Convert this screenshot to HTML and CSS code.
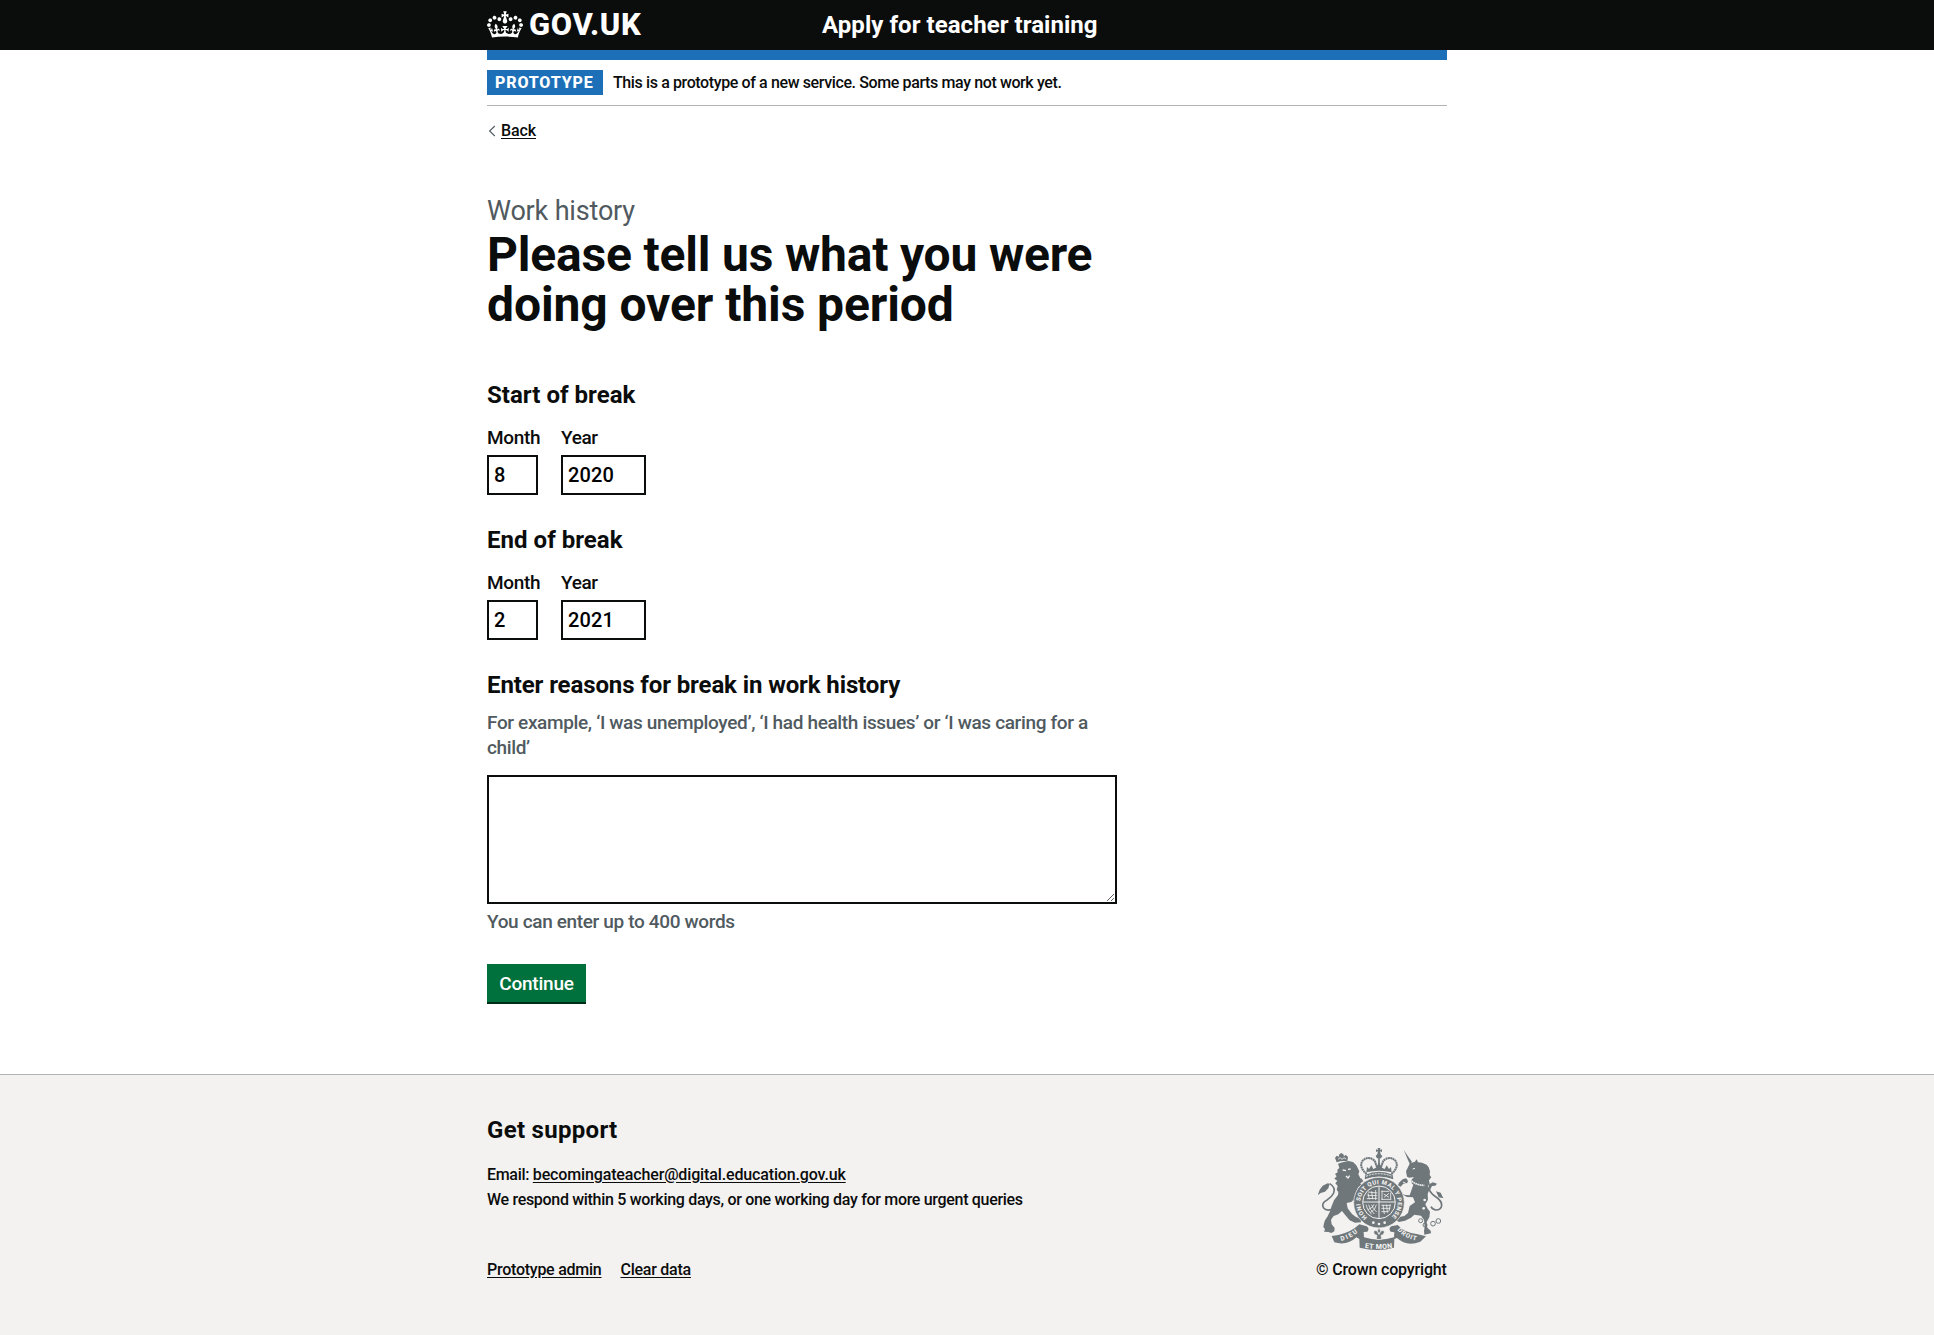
FILE: index.html
```
<!DOCTYPE html>
<html lang="en">
<head>
<meta charset="utf-8">
<title>Please tell us what you were doing over this period</title>
<link rel="stylesheet" href="styles.css">
</head>
<body>
<header class="header">
  <div class="container header-row">
    <a class="logo" href="#">
      <svg class="crown" viewBox="0 0 132 97" width="36" height="27" fill="currentColor" aria-hidden="true"><path fill-rule="evenodd" d="M25 30.2c3.5 1.5 7.7-.2 9.1-3.7 1.5-3.6-.2-7.8-3.9-9.2-3.6-1.4-7.6.3-9.1 3.9-1.4 3.5.3 7.5 3.9 9zM9 39.5c3.6 1.5 7.8-.2 9.2-3.7 1.5-3.6-.2-7.8-3.9-9.1-3.6-1.5-7.6.2-9.1 3.8-1.4 3.5.3 7.5 3.8 9zM4.4 57.2c3.5 1.5 7.7-.2 9.1-3.8 1.5-3.6-.2-7.7-3.9-9.1-3.5-1.5-7.6.3-9.1 3.8-1.4 3.5.3 7.6 3.9 9.1zm38.3-21.4c3.5 1.5 7.7-.2 9.1-3.8 1.5-3.6-.2-7.7-3.9-9.1-3.6-1.5-7.6.3-9.1 3.8-1.3 3.6.4 7.7 3.9 9.1zm64.4-5.6c-3.6 1.5-7.8-.2-9.1-3.7-1.5-3.6.2-7.8 3.8-9.2 3.6-1.4 7.7.3 9.2 3.9 1.3 3.5-.4 7.5-3.9 9zm15.9 9.3c-3.6 1.5-7.7-.2-9.1-3.7-1.5-3.6.2-7.8 3.7-9.1 3.6-1.5 7.7.2 9.2 3.8 1.5 3.5-.3 7.5-3.8 9zm4.7 17.7c-3.6 1.5-7.8-.2-9.2-3.8-1.5-3.6.2-7.7 3.9-9.1 3.6-1.5 7.7.3 9.2 3.8 1.3 3.5-.4 7.6-3.9 9.1zM89.3 35.8c-3.6 1.5-7.8-.2-9.2-3.8-1.4-3.6.2-7.7 3.9-9.1 3.6-1.5 7.7.3 9.2 3.8 1.4 3.6-.3 7.7-3.9 9.1zM69.7 17.7l8.9 4.7V9.3l-8.9 2.8c-.2-.3-.5-.6-.9-.9L72.4 0H59.6l3.5 11.2c-.3.3-.6.5-.9.9l-8.8-2.8v13.1l8.8-4.7c.3.3.6.7.9.9l-5 15.4v.1c-.2.8-.4 1.6-.4 2.4 0 4.1 3.1 7.5 7 8.1h.2c.3 0 .7.1 1 .1.4 0 .7 0 1-.1h.2c4-.6 7.1-4.1 7.1-8.1 0-.8-.1-1.7-.4-2.4V34l-5.1-15.4c.4-.2.7-.6 1-.9zM66 92.8c16.9 0 32.8 1.1 47.1 3.2 4-16.9 8.9-26.7 14-33.5l-9.6-3.4c1 4.9 1.1 7.2 0 10.2-1.5-1.4-3-4.3-4.2-8.7L108.6 76c2.8-2 5-3.2 7.5-3.3-4.4 9.4-10 11.9-13.6 11.2-4.3-.8-6.3-4.6-5.6-7.9 1-4.7 5.7-5.9 8-.5 4.3-8.7-3-11.4-7.6-8.8 7.1-7.2 7.9-13.5 2.1-21.1-8 6.1-8.1 12.3-4.5 20.8-4.7-5.4-12.1-2.5-9.5 6.2 3.4-5.2 7.9-2 7.2 3.1-.6 4.3-6.4 7.8-13.5 7.2-10.3-.9-10.9-8-11.2-13.8 2.5-.5 7.1 1.8 11 7.3L80.2 60c-4.1 4.4-8 5.3-12.3 5.4 1.4-4.4 8-11.6 8-11.6H55.5s6.4 7.2 7.9 11.6c-4.2-.1-8-1-12.3-5.4l1.4 16.4c3.9-5.5 8.5-7.7 10.9-7.3-.3 5.8-.9 12.8-11.1 13.8-7.2.6-12.9-2.9-13.5-7.2-.7-5 3.8-8.3 7.1-3.1 2.7-8.7-4.6-11.6-9.4-6.2 3.7-8.5 3.6-14.7-4.6-20.8-5.8 7.6-5 13.9 2.2 21.1-4.7-2.6-11.9.1-7.7 8.8 2.3-5.5 7.1-4.2 8.1.5.7 3.3-1.3 7.1-5.7 7.9-3.5.7-9-1.8-13.5-11.2 2.5.1 4.7 1.3 7.5 3.3l-4.7-15.4c-1.2 4.4-2.7 7.2-4.3 8.7-1.1-3-.9-5.3 0-10.2l-9.5 3.4c5 6.9 9.9 16.7 14 33.5 14.8-2.1 30.8-3.2 47.7-3.2z"/></svg>
      <span class="logo-text">GOV.UK</span>
    </a>
    <a class="service-name" href="#">Apply for teacher training</a>
  </div>
</header>

<div class="container">
  <div class="phase-banner">
    <strong class="tag">PROTOTYPE</strong>
    <span class="phase-text">This is a prototype of a new service. Some parts may not work yet.</span>
  </div>
  <a class="back" href="#">
    <svg width="8" height="12" viewBox="0 0 8 12" aria-hidden="true"><path d="M6.8 1L1.6 6l5.2 5" fill="none" stroke="#505a5f" stroke-width="1.1"/></svg>
    <span class="back-text">Back</span>
  </a>

  <main class="main">
    <span class="caption">Work history</span>
    <h1 class="title">Please tell us what you were <span class="title-end">doing over this period</span></h1>

    <section class="group">
      <h2 class="legend">Start of break</h2>
      <div class="date">
        <label class="field"><span>Month</span><input class="input month" value="8"></label>
        <label class="field"><span>Year</span><input class="input year" value="2020"></label>
      </div>
    </section>

    <section class="group">
      <h2 class="legend">End of break</h2>
      <div class="date">
        <label class="field"><span>Month</span><input class="input month" value="2"></label>
        <label class="field"><span>Year</span><input class="input year" value="2021"></label>
      </div>
    </section>

    <section class="group">
      <h2 class="legend reasons">Enter reasons for break in work history</h2>
      <p class="hint">For example, ‘I was unemployed’, ‘I had health issues’ or ‘I was caring for a child’</p>
      <textarea class="textarea"></textarea>
      <p class="count">You can enter up to 400 words</p>
    </section>

    <button class="button">Continue</button>
  </main>
</div>

<footer class="footer">
  <div class="container footer-row">
    <div class="footer-main">
      <h2 class="support">Get support</h2>
      <p class="footer-text">Email: <a class="email" href="#">becomingateacher@digital.education.gov.uk</a></p>
      <p class="footer-text respond">We respond within 5 working days, or one working day for more urgent queries</p>
      <nav class="links"><a href="#">Prototype admin</a><a href="#">Clear data</a></nav>
    </div>
    <a class="copyright" href="#">
      <svg class="crest" width="126" height="104" viewBox="57 51 378 312" aria-hidden="true">
        <defs>
          <path id="garter" d="M205 262A56 56 0 1 1 275 262"/>
          <path id="scroll-left" d="M127 333Q158 325 181 303"/>
          <path id="scroll-right" d="M295 300Q318 328 360 333"/>
          <path id="scroll-mid" d="M197 353Q240 361 285 353"/>
        </defs>
        <g fill="#6f777b">
          <!-- lion -->
          <path d="M113 97l-5-13 5-7 6 3 2-7 6-4 6 4 2 5 6-3 6 6-2 13q-16-3-32 3z"/>
          <path d="M117 101l14-4 17-4 14 3 10 10 9 18-3 9 6 12-2 12 5 8-9 6-8 18 4 16 8 12-9 4-10-11-6 6-14 3 3 16 13 17 12 9 14 5 1 11-18 1-16-7-14-17-9-11-11 10-14 5-8 11 2 14 9 11-1 10-9 5-9-3-13-1 3-7-5-7 2-11 3-9 8-12 7-15 5-16 7-17 12-16 1-9-5-7 3-11-7-8 6-8-9-6 7-7-5-7 8-5-1-8 6-5z"/>
          <path d="M168 150l19-5 6 9-20 13zM165 196l16-7 10 9-16 9z"/>
          <path d="M56 196l6-17 9-12 15-7 6 1-4 14-10 10-13 4z"/>
          <!-- unicorn -->
          <path d="M314 60l25 36-7 5z"/>
          <path d="M321 124l12-25 14-3 6-8 4 9 12 1 14 6 6 8 4 12-1 11 5 7-7 9 2 10-6 8 2 9-14 4-9-8-14-5-12-8-3-10 9-10-14 2-7-3z"/>
          <path d="M344 161l17 8 24-2 6 12-5 13 1 17-8 14 6 12 8 10-2 17-8 14 2 17 10 9 1 8-20 4-1-11 2-13-2-20-9-13-20-3-10 9-18 9-18 4-8-5 5-9 19-4 11-9 5-21 16-11-6-15-18-1-16-9-9 4 5 16-7 7-10-13-11-18-4-14 9-5 10 4 12 16 16 6 13 1z"/>
          <path d="M300 158l11-10 10-3 7 7-4 8-11 1-8 9-8-4z"/>
          <path d="M387 176l3-13 12-6 12 4-5 6-10 1-7 14zM411 184l14 4 8 17-14-3z"/>
          <!-- garter -->
          <circle cx="240" cy="218" r="76" stroke="#f3f2f1" stroke-width="2"/>
          <!-- crown over the shield -->
          <path d="M236 54h8l-1 6 6-2v8l-6-2 2 9 5 5-4 7h-12l-4-7 5-5 2-9-6 2v-8l6 2z"/>
          <path d="M199 134q41-17 82 0l2 14q-43-17-86 0z"/>
          <path d="M202 127l2-16 6 6 7-11 6 11 8-4 9-16 9 16 8 4 6-11 7 11 6-6 2 16q-38-10-76 0z"/>
          <!-- scroll -->
          <path d="M98 318l20-3q40-9 63-32l22 6q10 6 2 16l-11 1 1 16q45 14 90 0l1-15-11-2q-8-10 2-16l19-4q22 24 57 27l28 7-17 16q-41 16-70-11l-8 3-1 26q-49 14-103 0l-1-26-9-5q-27 26-66 15z"/>
        </g>
        <g fill="none" stroke="#6f777b">
          <path d="M92 161q19 12 12 28-6 13-20 21-19 10-10 24 7 9 22 5" stroke-width="5"/>
          <path d="M389 174q4 14 18 24 23 15 21 29-2 13-17 13-10 0-15-10" stroke-width="5"/>
          <path d="M203 132q-25-22-12-40 16-16 36 0l10 28M277 132q25-22 12-40-16-16-36 0l-10 28" stroke-width="6" stroke-dasharray="6 1.2"/>
          <path d="M240 84v36" stroke-width="5"/>
          <g stroke-width="3"><circle cx="365" cy="272" r="6"/><circle cx="378" cy="285" r="6"/><circle cx="402" cy="281" r="7"/><circle cx="418" cy="273" r="7"/></g>
        </g>
        <g fill="none" stroke="#f3f2f1">
          <circle cx="240" cy="217" r="49" stroke-width="3"/>
          <path d="M240 169v96M192 216h96" stroke-width="3"/>
          <path d="M207 186l28 3M205 196l30 1M203 206l32-1M247 184h24M247 208h30M249 182v28M275 188v20M207 190l4 18M218 184l3 24M230 180v30M254 192l16 10M270 190l-15 12" stroke-width="2.5"/>
          <path d="M201 224q3 17 17 29M209 224q3 15 17 28M218 224q3 12 15 22M232 224q-2 15-18 24M225 223q-2 10-18 16M247 226h28M247 235h27M247 245h22M252 224l4 28M263 224l2 24M274 223l-4 20" stroke-width="2.5"/>
          <path d="M201 139q39-16 78 0" stroke-width="3" stroke-dasharray="6 3"/>
          <path d="M333 149q18 17 43 17" stroke-width="5" stroke-dasharray="5 1.5"/>
          <path d="M131 120l10 2M147 118l8-1M141 138l6 6 5-7" stroke-width="4"/>
          <path d="M341 117l7-2" stroke-width="3"/>
          <path d="M117 88l6-5 6 5 6-5 6 4" stroke-width="2.5"/>
          <path d="M312 156l10 5M325 150l7 5" stroke-width="3"/>
        </g>
        <g fill="#f3f2f1"><circle cx="377" cy="210" r="4"/><circle cx="374" cy="235" r="4"/><circle cx="223" cy="278" r="4"/><circle cx="240" cy="282" r="4"/><circle cx="257" cy="278" r="4"/></g>
        <path fill="#6f777b" stroke="#f3f2f1" stroke-width="2" d="M240 293q9 11 1 20 1-13 14-11 3 11-9 14l2 12h-16l2-12q-12-3-9-14 13-2 14 11-8-9 1-20z"/>
        <g class="motto">
          <text font-size="18"><textPath href="#garter" textLength="272">HONI SOIT QUI MAL Y PENSE</textPath></text>
          <text font-size="19"><textPath href="#scroll-left" textLength="56">DIEU</textPath></text>
          <text font-size="19"><textPath href="#scroll-right" textLength="66">DROIT</textPath></text>
          <text font-size="21"><textPath href="#scroll-mid" textLength="84">ET MON</textPath></text>
        </g>
      </svg>
      <span>© Crown copyright</span>
    </a>
  </div>
</footer>
</body>
</html>
```
FILE: styles.css
```
* { box-sizing: border-box; }
body { margin: 0; min-height: 1335px; display: flex; flex-direction: column; background: #fff; color: #0b0c0c; font: 500 16px/20px Roboto, "Liberation Sans", sans-serif; -webkit-font-smoothing: antialiased; }
a { color: inherit; }
h1, h2, p { margin: 0; }
.container { width: 960px; margin: 0 auto; }

.header { height: 50px; background: #0b0c0c; color: #fff; }
.header-row { display: flex; height: 50px; }
.header a { text-decoration: none; }
.logo { display: flex; width: 335px; padding-top: 11px; }
.logo-text { margin-left: 6px; font-size: 31px; line-height: 27px; font-weight: 800; letter-spacing: 0.6px; }
.service-name { font-size: 24px; line-height: 30px; font-weight: 700; padding-top: 10px; letter-spacing: 0.05px; }

.phase-banner { display: flex; align-items: flex-start; border-top: 10px solid #1d70b8; border-bottom: 1px solid #b1b4b6; padding: 10px 0; }
.tag { width: 116px; height: 25px; padding-left: 8px; background: #1d70b8; color: #fff; line-height: 25px; font-weight: 800; letter-spacing: 0.85px; }
.phase-text { margin: 3px 0 0 10px; letter-spacing: -0.385px; }

.back { display: flex; align-items: center; width: max-content; margin-top: 15px; text-decoration: none; }
.back svg { margin-left: 1px; }
.back-text { margin-left: 5px; letter-spacing: -0.1px; text-decoration: underline; text-underline-offset: 2px; }

.main { width: 630px; margin-top: 55px; }
.caption { display: block; font-size: 27px; line-height: 30px; font-weight: 400; letter-spacing: -0.17px; color: #505a5f; }
.title { margin: 4px 0 50px; font-size: 48px; line-height: 50px; font-weight: 700; letter-spacing: -0.19px; }
.title-end { display: block; letter-spacing: -0.1px; }
.group { margin-bottom: 30px; }
.legend, .support { font-size: 24px; line-height: 30px; font-weight: 700; }
.legend { margin-bottom: 15px; letter-spacing: 0.03px; }
.reasons { margin-bottom: 10px; letter-spacing: -0.11px; }
.date { display: flex; }
.field { display: flex; flex-direction: column; gap: 5px; width: 74px; font-size: 19px; line-height: 25px; font-weight: 500; letter-spacing: -0.35px; }
.input { height: 40px; padding: 3px 5px; border: 2px solid #0b0c0c; border-radius: 0; background: #fff; color: #000; font: 500 20px/24px Roboto, "Liberation Sans", sans-serif; letter-spacing: 0.1px; }
.month { width: 51px; }
.year { width: 85px; }
.hint, .count { font-size: 19px; line-height: 25px; font-weight: 500; letter-spacing: -0.35px; color: #505a5f; }
.textarea { display: block; width: 630px; height: 129px; margin: 15px 0 5px; border: 2px solid #0b0c0c; border-radius: 0; resize: vertical; background: #fff; }
.button { display: block; width: 99px; height: 38px; padding: 1px 0 0; border: 0; background: #00703c; box-shadow: 0 2px 0 #002d18; color: #fff; font: 500 19px/37px Roboto, "Liberation Sans", sans-serif; letter-spacing: -0.2px; }

.footer { flex: 1; margin-top: 72px; padding-top: 40px; border-top: 1px solid #b1b4b6; background: #f3f2f1; }
.footer-row { display: flex; justify-content: space-between; align-items: flex-end; }
.support { margin-bottom: 17px; letter-spacing: 0.3px; }
.footer-text { line-height: 25px; letter-spacing: -0.31px; }
.email { letter-spacing: -0.14px; }
.footer a { text-underline-offset: 2px; }
.links { display: flex; gap: 19px; margin-top: 48px; letter-spacing: -0.25px; }
.copyright { display: flex; flex-direction: column; width: 131px; text-decoration: none; letter-spacing: -0.16px; }
.crest { margin: 0 0 9px 2px; }
.motto text { fill: #f3f2f1; font-family: Roboto, sans-serif; font-weight: 800; letter-spacing: 0; }
```
